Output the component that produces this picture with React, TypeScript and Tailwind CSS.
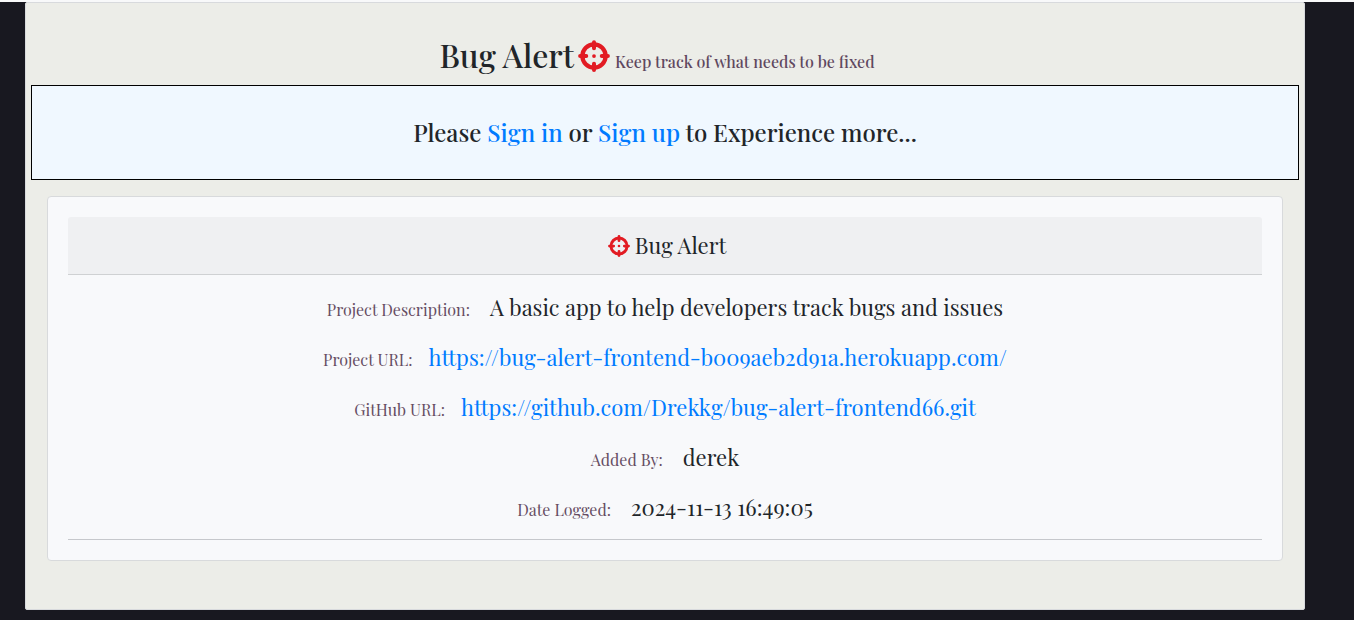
import type { ReactNode } from 'react';

const link = 'text-[#007bff] hover:underline';

function Crosshairs({ className }: { className: string }) {
  return (
    <svg
      className={`shrink-0 text-[#e21b23] ${className}`}
      viewBox="0 0 512 512"
      fill="none"
      stroke="currentColor"
      aria-hidden="true"
    >
      <circle cx="256" cy="256" r="186" strokeWidth="68" />
      <path d="M256 34v98M256 380v98M34 256h98M380 256h98" strokeWidth="64" strokeLinecap="round" />
      <circle cx="256" cy="256" r="30" fill="currentColor" stroke="none" />
    </svg>
  );
}

function Row({ label, gap, children }: { label: string; gap: string; children: ReactNode }) {
  return (
    <div className={`flex items-baseline justify-center ${gap}`}>
      <dt className="leading-6 text-[#664d63]">{label}</dt>
      <dd className="text-[22px] leading-[34px]">{children}</dd>
    </div>
  );
}

export default function App() {
  return (
    <div className="min-h-screen border-t-2 border-[#f8f9fa] bg-[#181820] pr-[49px] pb-2 pl-[25px] font-['Playfair_Display','Liberation_Serif',serif] text-[#212529]">
      <main className="rounded-xs border border-[#d8dadd] bg-[#ecede8] px-[5px] pb-12">
        <header className="flex h-[82px] items-baseline justify-center gap-[5px] pt-[30px] pr-4">
          <h1 className="flex items-center gap-1 text-[32px] leading-[44px] font-medium">
            Bug Alert
            <Crosshairs className="mt-[2px] size-8" />
          </h1>
          <p className="font-medium text-[#5f4860]">Keep track of what needs to be fixed</p>
        </header>

        <section className="flex h-[95px] items-center justify-center border border-black bg-[#f0f8ff] pb-[2px]">
          <h2 className="text-2xl font-medium">
            Please <a className={link} href="#signin">Sign in</a> or{' '}
            <a className={link} href="#signup">Sign up</a> to Experience more...
          </h2>
        </section>

        <article className="mx-4 mt-4 rounded border border-[#d8dadc] bg-[#f8f9fb] p-5">
          <h3 className="flex h-[58px] items-center justify-center gap-[5px] rounded-t-[3px] border-b border-[#cfd1d3] bg-[#eff0f2] pl-1 text-[22px]">
            <Crosshairs className="size-[22px]" />
            Bug Alert
          </h3>
          <dl className="flex flex-col gap-4 border-b border-[#c6c8cc] pt-[15px] pb-[15px]">
            <Row label="Project Description:" gap="gap-5">A basic app to help developers track bugs and issues</Row>
            <Row label="Project URL:" gap="gap-4">
              <a className={link} href="https://bug-alert-frontend-b009aeb2d91a.herokuapp.com/">
                https://bug-alert-frontend-b009aeb2d91a.herokuapp.com/
              </a>
            </Row>
            <Row label="GitHub URL:" gap="gap-4">
              <a className={link} href="https://github.com/Drekkg/bug-alert-frontend66.git">
                https://github.com/Drekkg/bug-alert-frontend66.git
              </a>
            </Row>
            <Row label="Added By:" gap="gap-5">derek</Row>
            <Row label="Date Logged:" gap="gap-5">2024-11-13 16:49:05</Row>
          </dl>
        </article>
      </main>
    </div>
  );
}
